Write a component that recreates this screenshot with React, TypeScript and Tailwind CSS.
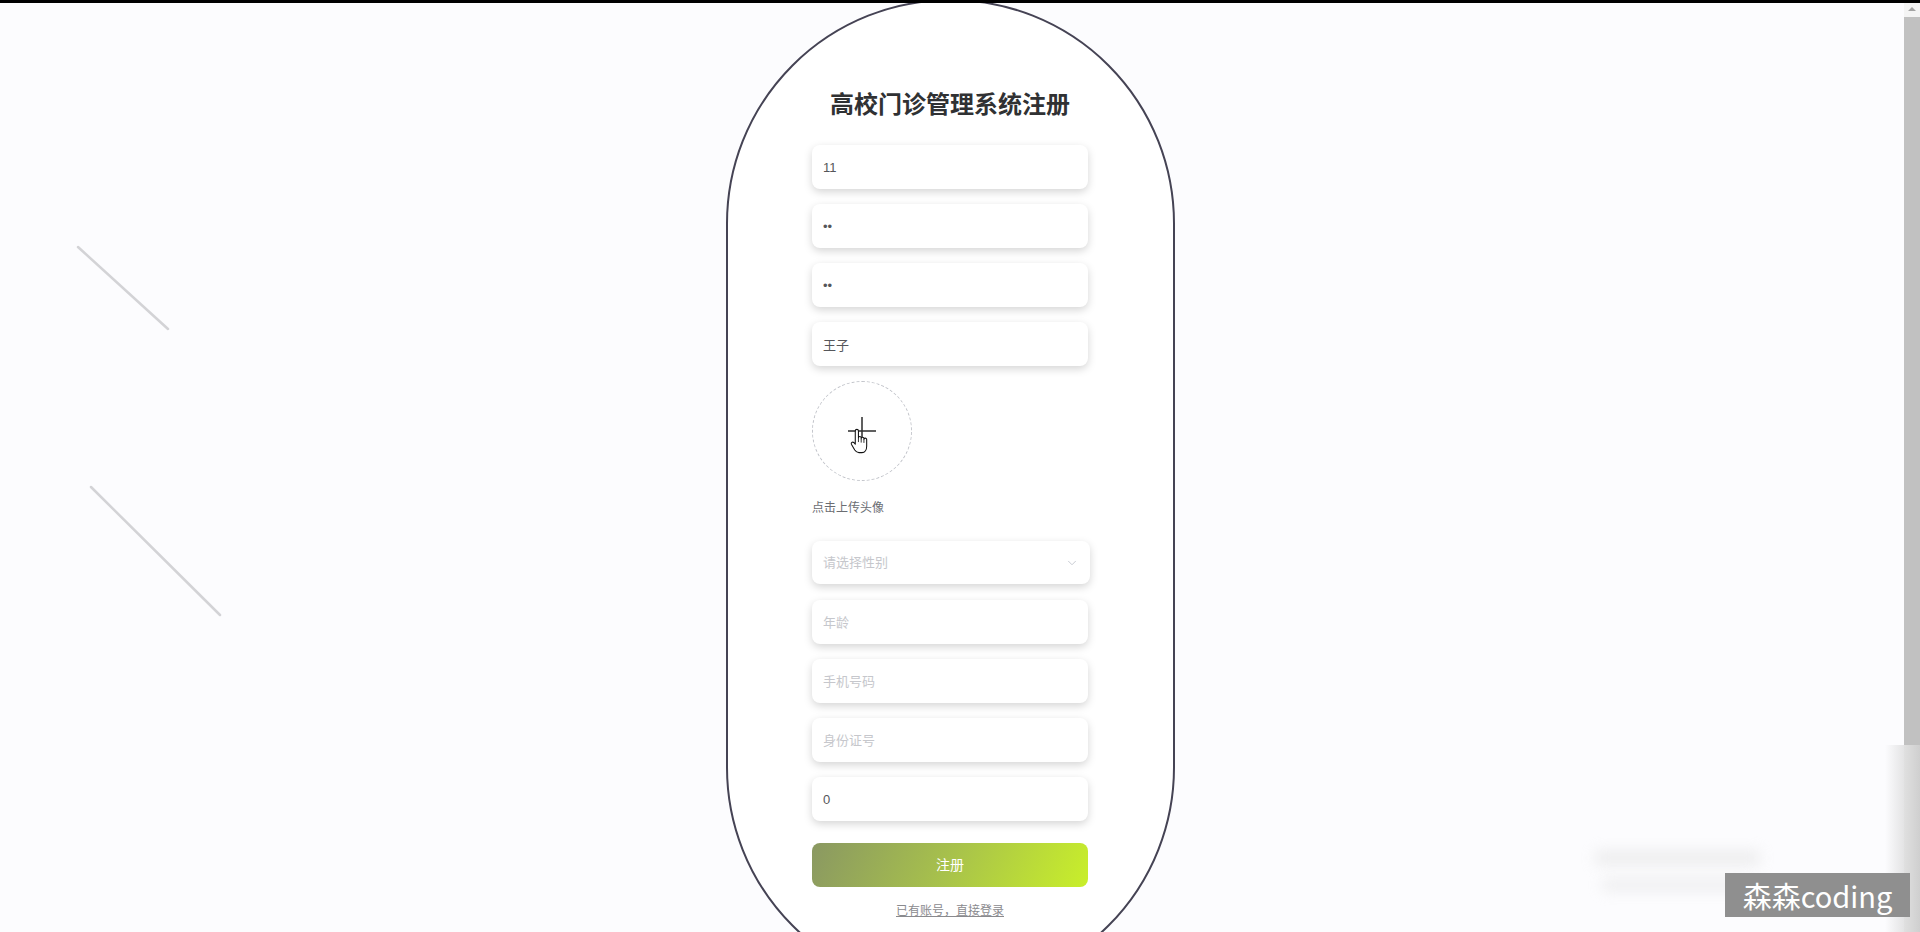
import { ChevronDown } from "lucide-react";

const font = "font-['Liberation_Sans','Noto_Sans_CJK_SC',sans-serif]";

function Field({
  value,
  placeholder,
  type = "text",
}: {
  value?: string;
  placeholder?: string;
  type?: string;
}) {
  return (
    <div className="h-[44px] w-full rounded-[8px] bg-white shadow-[0_3px_8px_rgba(0,0,0,0.17)]">
      <input
        type={type}
        defaultValue={value}
        placeholder={placeholder}
        readOnly
        className={`h-full w-full rounded-[8px] bg-transparent px-[11px] text-[13px] text-[#55565a] outline-none placeholder:text-[#c6c7cc] ${font}`}
      />
    </div>
  );
}

function HandCursor() {
  return (
    <svg width="19" height="26" viewBox="0 0 18 24" className="absolute left-[850px] top-[428px]">
      <path
        d="M5 2.5a1.5 1.5 0 0 1 3 0V9a1.3 1.3 0 0 1 2.6 0v0.8a1.3 1.3 0 0 1 2.6 0v0.8a1.3 1.3 0 0 1 2.6 0V17c0 3-1.5 6-4.5 6H8.5c-2 0-3-1-4-2.5L1.3 15a1.4 1.4 0 0 1 2.2-1.6L5 15Z"
        fill="#fff"
        stroke="#111"
        strokeWidth="1"
        strokeLinejoin="round"
      />
      <path d="M8 9v4M10.6 10v3.5M13.2 10.8v3" stroke="#111" strokeWidth="0.8" />
    </svg>
  );
}

export default function App() {
  return (
    <div className={`relative h-[932px] w-full overflow-hidden bg-[#fcfcfe] ${font}`}>
      {/* background streaks */}
      <svg className="pointer-events-none absolute left-0 top-0" width="400" height="700">
        <line x1="78" y1="247" x2="168" y2="329" stroke="#d3d3d6" strokeWidth="2.5" strokeLinecap="round" />
        <line x1="91" y1="487" x2="220" y2="615" stroke="#d3d3d6" strokeWidth="2.5" strokeLinecap="round" />
      </svg>

      <div className="flex h-full">
        <main className="flex flex-1 justify-center overflow-hidden pr-[4px]">
          <div className="-mt-[1px] flex h-[993px] w-[449px] shrink-0 flex-col items-center rounded-full border-[2.5px] border-[#454354] bg-white pt-[88px]">
            <h1 className="text-[24px] font-bold leading-[32px] text-[#303133]">高校门诊管理系统注册</h1>

            <div className="mt-[24px] flex w-[276px] flex-col">
              <div className="flex flex-col gap-[15px]">
                <Field value="11" />
                <Field value="11" type="password" />
                <Field value="11" type="password" />
                <Field value="王子" />
              </div>

              <div className="mt-[15px] flex h-[100px] w-[100px] items-center justify-center rounded-full border border-dashed border-[#c3c5cb]">
                <svg width="28" height="28" viewBox="0 0 28 28">
                  <path d="M14 0v28M0 14h28" stroke="#2d2d2d" strokeWidth="1.5" />
                </svg>
              </div>

              <p className="mt-[17px] text-[12px] leading-[20px] text-[#6b6d72]">点击上传头像</p>

              <div className="mt-[23px] flex h-[43px] w-[278px] items-center justify-between rounded-[8px] bg-white px-[11px] shadow-[0_3px_8px_rgba(0,0,0,0.17)]">
                <span className="text-[13px] text-[#c6c7cc]">请选择性别</span>
                <ChevronDown size={14} strokeWidth={1.5} color="#c0c4cc" />
              </div>

              <div className="mt-[16px] flex flex-col gap-[15px]">
                <Field placeholder="年龄" />
                <Field placeholder="手机号码" />
                <Field placeholder="身份证号" />
                <Field value="0" />
              </div>

              <button className="mt-[22px] h-[44px] w-full rounded-[8px] bg-[linear-gradient(115deg,#8a9862_0%,#a8c24b_50%,#c9ef2a_100%)] text-[14px] text-white">
                注册
              </button>

              <a className="mt-[16px] self-center text-[12px] leading-[16px] text-[#8a8a8e] underline">
                已有账号，直接登录
              </a>
            </div>
          </div>
        </main>

        {/* scrollbar */}
        <aside className="flex w-[16px] flex-col bg-[#f4f4f4]">
          <div className="flex h-[17px] items-center justify-center">
            <div className="h-0 w-0 border-x-[4px] border-b-[4px] border-x-transparent border-b-[#a3a3a3]" />
          </div>
          <div className="h-[728px] bg-[#c1c1c1]" />
        </aside>
      </div>

      <HandCursor />

      {/* frame overlays */}
      <div className="absolute left-0 top-0 h-[3px] w-full bg-black" />
      <div className="absolute left-[1885px] top-[745px] h-[187px] w-[35px] bg-gradient-to-r from-transparent to-[#cfcfcf]" />
      <div className="absolute left-[1595px] top-[850px] h-[16px] w-[165px] bg-[#d9d9d9] opacity-40 blur-[7px]" />
      <div className="absolute left-[1602px] top-[878px] h-[14px] w-[145px] bg-[#d9d9d9] opacity-35 blur-[7px]" />
      <div className="absolute left-[1725px] top-[873px] flex h-[44px] w-[185px] items-center justify-center bg-[#8f8f8f]">
        <span className="font-['Noto_Sans_CJK_SC',sans-serif] text-[29px] leading-none text-white">森森coding</span>
      </div>
    </div>
  );
}
